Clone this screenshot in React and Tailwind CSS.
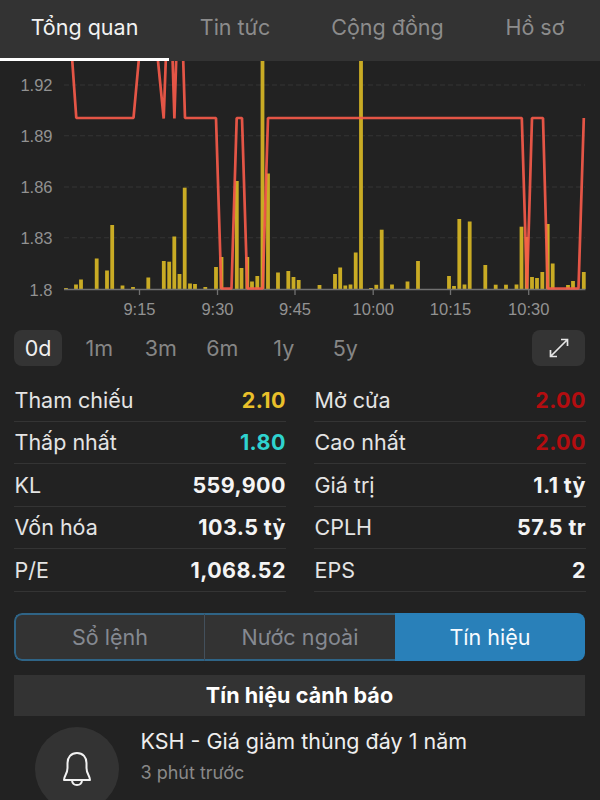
import clsx from "clsx";

const TABS = [
  { label: "Tổng quan", width: "w-[169px]" },
  { label: "Tin tức", width: "w-[132px]" },
  { label: "Cộng đồng", width: "w-[173px]" },
  { label: "Hồ sơ", width: "w-[122px]" },
];

const RANGES = ["0d", "1m", "3m", "6m", "1y", "5y"];

const LEFT_STATS = [
  { label: "Tham chiếu", value: "2.10", color: "text-[#eac02a]" },
  { label: "Thấp nhất", value: "1.80", color: "text-[#2fd3cf]" },
  { label: "KL", value: "559,900" },
  { label: "Vốn hóa", value: "103.5 tỷ" },
  { label: "P/E", value: "1,068.52" },
];

const RIGHT_STATS = [
  { label: "Mở cửa", value: "2.00", color: "text-[#b40d10]" },
  { label: "Cao nhất", value: "2.00", color: "text-[#b40d10]" },
  { label: "Giá trị", value: "1.1 tỷ" },
  { label: "CPLH", value: "57.5 tr" },
  { label: "EPS", value: "2" },
];

// [x, height above the axis]
const VOLUME = [
  [66, 1], [76, 4.5], [81, 9.5], [96.7, 30.5], [107, 18.5], [112.2, 64],
  [122.5, 3.5], [133, 2], [148.3, 11.5], [163.8, 28], [169.2, 27.3],
  [174.3, 52.5], [179.5, 15], [184.7, 101.3], [190, 5.5], [195, 5],
  [205.3, 2], [216, 22], [221.5, 32], [236.8, 108], [241.5, 21],
  [247.3, 32], [252, 7.5], [257.3, 13], [262.5, 230], [268, 115.5],
  [278, 16.5], [288.3, 18], [293.5, 12], [298.7, 9], [319.5, 4],
  [335, 15], [340.2, 21.5], [345.3, 3.5], [350.5, 4.5], [355.7, 36.5],
  [361, 230], [371, 1], [376.3, 4.2], [381.7, 59.3], [392, 4.5],
  [407.5, 7.5], [418, 28], [449, 13], [454, 3], [459.3, 70],
  [464.5, 4.5], [469.7, 67.5], [485.3, 24], [495.7, 4.3], [506, 4.3],
  [516.5, 4.5], [521.5, 62.3], [526.7, 52], [532, 12], [537, 11],
  [542.3, 17], [547.7, 65], [552.7, 25.5], [568, 4], [573, 8],
  [583.8, 17],
];

const PRICE =
  "M72.2 0L76.3 58H133.5L138.8 0M157.9 0L163.7 58.5L165.8 0M172.6 0L174.4 58.5L176.2 0M183.2 0L185 58H216L221.3 228.5H231.5L236.7 58H242L247.3 228.5H262.7L268 58H521.8L527 228.5L532 58H543L547.7 228.5H578.5L583.8 58";

const GRID = [
  { y: 24.5, label: "1.92" },
  { y: 75.3, label: "1.89" },
  { y: 126.5, label: "1.86" },
  { y: 177.3, label: "1.83" },
  { y: 229, label: "1.8" },
];

const TIMES = [
  { x: 139.5, label: "9:15" },
  { x: 217.5, label: "9:30" },
  { x: 295, label: "9:45" },
  { x: 373.2, label: "10:00" },
  { x: 450.5, label: "10:15" },
  { x: 528.7, label: "10:30" },
];

function PriceChart() {
  return (
    <svg
      className="block h-[264px] w-[600px] font-['Liberation_Sans',sans-serif]"
      viewBox="0 1 600 264"
    >
      {GRID.slice(0, 4).map(({ y }) => (
        <line
          key={y}
          x1="64"
          x2="585"
          y1={y + 0.5}
          y2={y + 0.5}
          stroke="#353535"
          strokeDasharray="5 3"
        />
      ))}
      {GRID.map(({ y, label }) => (
        <text key={label} x="52.5" y={y + 6.5} textAnchor="end" fontSize="16.5" fill="#929292">
          {label}
        </text>
      ))}
      {VOLUME.map(([x, h]) => (
        <rect key={x} x={x - 1.9} y={229 - h} width="3.8" height={h} fill="#c9ab24" />
      ))}
      <path d="M64 229.5H585.5" stroke="#717171" strokeWidth="1.4" />
      {TIMES.map(({ x, label }) => (
        <g key={label}>
          <line x1={x} x2={x} y1="229" y2="235" stroke="#717171" strokeWidth="1.3" />
          <text x={x} y="254.8" textAnchor="middle" fontSize="16.5" fill="#929292">
            {label}
          </text>
        </g>
      ))}
      <path
        d={PRICE}
        fill="none"
        stroke="#f55a4a"
        strokeOpacity="0.92"
        strokeWidth="2.7"
        strokeLinejoin="bevel"
      />
    </svg>
  );
}

function StatColumn({ rows }) {
  return (
    <div className="w-[271.5px]">
      {rows.map(({ label, value, color }) => (
        <div
          key={label}
          className="flex h-[42.6px] items-center justify-between border-b border-[#343434] pl-[0.5px] text-[21.5px] whitespace-nowrap"
        >
          <span className="text-[#e4e4e4]">{label}</span>
          <span
            className={clsx("-mr-[0.4px] font-bold tracking-[0.4px]", color || "text-[#f4f4f4]")}
          >
            {value}
          </span>
        </div>
      ))}
    </div>
  );
}

function BellIcon() {
  return (
    <svg
      className="h-[36px] w-[30px]"
      viewBox="0 0 30 36"
      fill="none"
      stroke="#f2f2f2"
      strokeWidth="2"
      strokeLinejoin="round"
      strokeLinecap="round"
    >
      <path d="M15 2C9 2 5.5 6.5 5.5 12V17C5.5 23 2 24.5 2 29H28C28 24.5 24.5 23 24.5 17V12C24.5 6.5 21 2 15 2Z" />
      <path d="M10 29.5C10.3 32.3 12.5 34 15 34C17.5 34 19.7 32.3 20 29.5" />
    </svg>
  );
}

export default function App() {
  return (
    <div className="h-[800px] w-[600px] overflow-hidden bg-[#222222] font-['Inter',sans-serif]">
      <nav className="flex h-[61px] bg-[#333333] text-[21.5px]">
        {TABS.map(({ label, width }, i) => (
          <button
            key={label}
            className={clsx(
              "flex-none border-b-[3px] pb-[3px] whitespace-nowrap",
              width,
              i === 0 ? "border-white text-[#f2f2f2]" : "border-transparent text-[#8c8c8c]"
            )}
          >
            {label}
          </button>
        ))}
      </nav>

      <PriceChart />

      <div className="mt-[5px] flex h-[36px] items-center justify-between pr-[15px] pl-[14px]">
        <div className="flex h-full text-[21.5px]">
          {RANGES.map((range, i) => (
            <button
              key={range}
              className={clsx(
                "h-full rounded-lg",
                i === 0
                  ? "mr-[6.5px] w-[48px] bg-[#343434] text-[#f0f0f0]"
                  : "w-[61.5px] text-[#868686]"
              )}
            >
              {range}
            </button>
          ))}
        </div>
        <button className="flex h-full w-[53px] items-center justify-center rounded-lg bg-[#343434]">
          <svg
            className="h-5 w-5"
            viewBox="0 0 20 20"
            fill="none"
            stroke="#e6e6e6"
            strokeWidth="1.7"
          >
            <path d="M1.5 18.5L18.5 1.5M12 1.5H18.5V8M1.5 12V18.5H8" />
          </svg>
        </button>
      </div>

      <div className="mt-[13px] flex justify-between pr-[14.5px] pl-[14px]">
        <StatColumn rows={LEFT_STATS} />
        <StatColumn rows={RIGHT_STATS} />
      </div>

      <div className="mt-[21px] mr-[15px] ml-[14px] flex h-[48px] overflow-hidden rounded-lg text-[21.5px] text-[#858991]">
        <button className="w-[191px] rounded-l-lg border-2 border-r border-[#2f6486] border-r-[#43505c] bg-[#333333]">
          Sổ lệnh
        </button>
        <button className="w-[190px] border-y-2 border-[#2f6486] bg-[#333333] tracking-[0.1px]">
          Nước ngoài
        </button>
        <button className="flex-1 bg-[#2980b9] text-[#f6fbff]">Tín hiệu</button>
      </div>

      <h2 className="mt-[14px] mr-[15px] ml-[14px] flex h-[41px] items-center justify-center bg-[#333333] text-[21.5px] font-bold tracking-[0.1px] text-white">
        Tín hiệu cảnh báo
      </h2>

      <div className="flex pt-[11px] pl-[35px]">
        <div className="flex h-[84px] w-[84px] items-center justify-center rounded-full bg-[#333333]">
          <BellIcon />
        </div>
        <div className="ml-[21.5px] whitespace-nowrap">
          <div className="text-[21.5px] leading-[28px] text-[#eeeeee]">
            KSH - Giá giảm thủng đáy 1 năm
          </div>
          <div className="mt-[5px] text-[18px] leading-[26px] text-[#898989]">3 phút trước</div>
        </div>
      </div>
    </div>
  );
}
